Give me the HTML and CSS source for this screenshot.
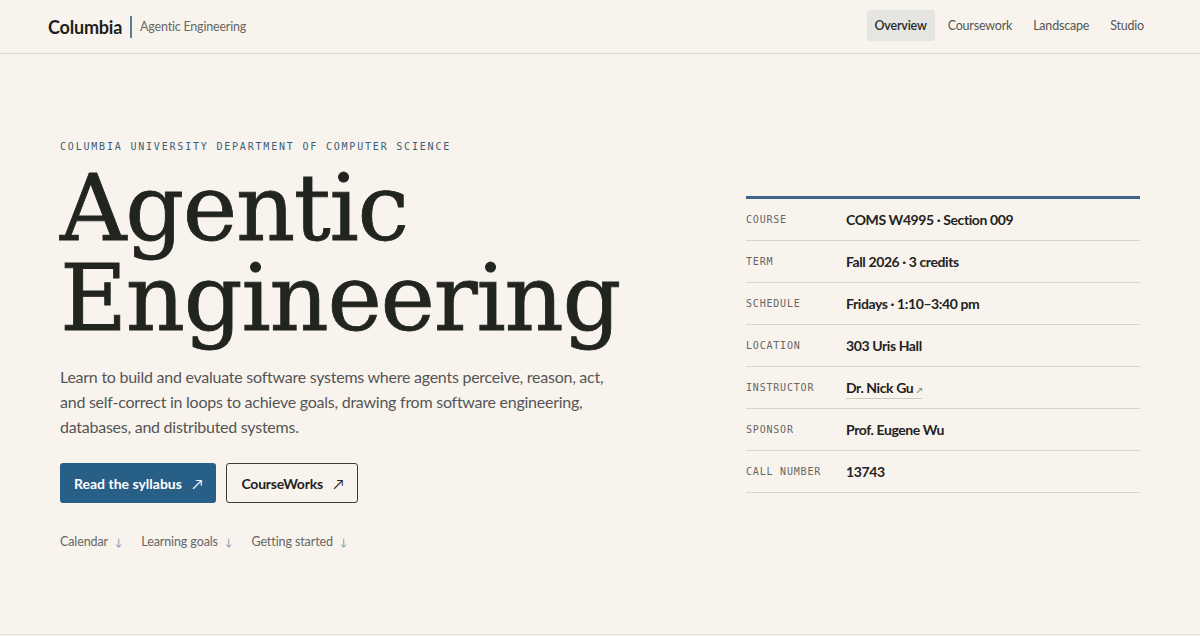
FILE: index.html
```html
<!DOCTYPE html>
<html lang="en">
<head>
    <meta charset="UTF-8">
    <meta name="viewport" content="width=device-width, initial-scale=1.0">
    <title>Agentic Engineering · Columbia</title>
    <link rel="stylesheet" href="styles.css">
</head>
<body>
    <header class="site-header">
        <a class="brand" href="#">
            <span class="brand-name">Columbia</span>
            <span class="brand-sep"></span>
            <span class="brand-course">Agentic Engineering</span>
        </a>
        <nav class="nav">
            <a class="nav-link active" href="#">Overview</a>
            <a class="nav-link" href="#">Coursework</a>
            <a class="nav-link" href="#">Landscape</a>
            <a class="nav-link" href="#">Studio</a>
        </nav>
    </header>

    <main class="hero">
        <div class="hero-inner">
            <div class="intro">
                <p class="eyebrow">Columbia University Department of Computer Science</p>
                <h1 class="title">Agentic<br>Engineering</h1>
                <p class="lede">Learn to build and evaluate software systems where agents perceive, reason, act, and self-correct in loops to achieve goals, drawing from software engineering, databases, and distributed systems.</p>
                <div class="actions">
                    <a class="btn btn-primary" href="#">Read the syllabus <span class="arrow">↗</span></a>
                    <a class="btn btn-outline" href="#">CourseWorks <span class="arrow">↗</span></a>
                </div>
                <div class="jump-links">
                    <a href="#">Calendar <span>↓</span></a>
                    <a href="#">Learning goals <span>↓</span></a>
                    <a href="#">Getting started <span>↓</span></a>
                </div>
            </div>

            <dl class="facts">
                <div class="fact"><dt>Course</dt><dd>COMS W4995 · Section 009</dd></div>
                <div class="fact"><dt>Term</dt><dd>Fall 2026 · 3 credits</dd></div>
                <div class="fact"><dt>Schedule</dt><dd>Fridays · 1:10–3:40 pm</dd></div>
                <div class="fact"><dt>Location</dt><dd>303 Uris Hall</dd></div>
                <div class="fact"><dt>Instructor</dt><dd><a class="person" href="#">Dr. Nick Gu <small>↗</small></a></dd></div>
                <div class="fact"><dt>Sponsor</dt><dd>Prof. Eugene Wu</dd></div>
                <div class="fact"><dt>Call number</dt><dd>13743</dd></div>
            </dl>
        </div>
    </main>
</body>
</html>
```

FILE: styles.css
```css
body {
    margin: 0;
    background: #f8f4ed;
    color: #222;
    font-family: Lato, "Noto Sans", sans-serif;
}
a {
    color: inherit;
    text-decoration: none;
}

/* top bar */
.site-header {
    height: 53px;
    border-bottom: 1px solid #dedad2;
    display: flex;
    align-items: center;
    justify-content: space-between;
    padding: 0 48px;
}
.brand {
    display: flex;
    align-items: center;
    gap: 8px;
}
.brand-name {
    font-size: 18px;
    font-weight: 700;
    color: #1f1f1f;
    letter-spacing: -0.2px;
}
.brand-sep {
    width: 2px;
    height: 22px;
    background: #5b7c98;
}
.brand-course {
    font-size: 12.5px;
    color: #666;
    letter-spacing: -0.2px;
}
.nav {
    display: flex;
    gap: 5px;
    margin-top: -2px;
}
.nav-link {
    font-size: 12.5px;
    color: #555;
    padding: 8px;
    border-radius: 3px;
    letter-spacing: -0.2px;
}
.nav-link.active {
    background: #e5e5e1;
    color: #2a2a2a;
    font-weight: 600;
}

/* hero */
.hero {
    min-height: 580px;
    border-bottom: 1px solid #e2ded6;
    display: flex;
    align-items: center;
}
.hero-inner {
    width: 1080px;
    margin: 0 auto;
    display: grid;
    grid-template-columns: 1fr 395px;
    align-items: center;
}
.intro {
    margin: -1px 0 -3px;
}
.eyebrow {
    margin: 0 0 12px;
    font-family: "DejaVu Sans Mono", monospace;
    font-size: 10px;
    letter-spacing: 1.8px;
    text-transform: uppercase;
    color: #3d5d78;
}
.title {
    margin: 0 0 20px;
    font-family: "DejaVu Serif", serif;
    font-weight: 400;
    font-size: 92px;
    line-height: 90px;
    letter-spacing: -1.3px;
    color: #22241f;
    -webkit-text-stroke: 0.8px #22241f;
}
.lede {
    margin: 0 0 24px;
    max-width: 560px;
    font-size: 16px;
    line-height: 25px;
    letter-spacing: -0.25px;
    color: #555;
}
.actions {
    display: flex;
    gap: 10px;
    margin-bottom: 31px;
}
.btn {
    display: inline-flex;
    align-items: center;
    gap: 10px;
    height: 40px;
    box-sizing: border-box;
    padding: 0 14px;
    border-radius: 3px;
    font-size: 14px;
    font-weight: 700;
}
.btn-primary {
    background: #285f87;
    color: #fff;
}
.btn-outline {
    border: 1px solid #3a3a3a;
    color: #222;
    letter-spacing: -0.2px;
}
.arrow {
    font-weight: 400;
    font-size: 14px;
}
.jump-links {
    display: flex;
    gap: 19px;
    font-size: 12.5px;
    color: #666;
    letter-spacing: -0.1px;
}
.jump-links span {
    color: #7b93a8;
    font-size: 10px;
    margin-left: 4px;
}

/* course facts */
.facts {
    margin: 1px 0 0 1px;
    border-top: 3px solid #3d6589;
}
.fact {
    display: grid;
    grid-template-columns: 100px 1fr;
    align-items: center;
    height: 41px;
    border-bottom: 1px solid #d9d5cd;
}
.fact dt {
    font-family: "DejaVu Sans Mono", monospace;
    font-size: 10px;
    letter-spacing: 0.8px;
    text-transform: uppercase;
    color: #666;
}
.fact dd {
    margin: 0;
    font-size: 14px;
    font-weight: 700;
    letter-spacing: -0.4px;
    color: #222;
}
.person {
    border-bottom: 1px solid #d0ccc4;
    padding-bottom: 2px;
}
.person small {
    font-size: 8px;
    color: #888;
}
```
